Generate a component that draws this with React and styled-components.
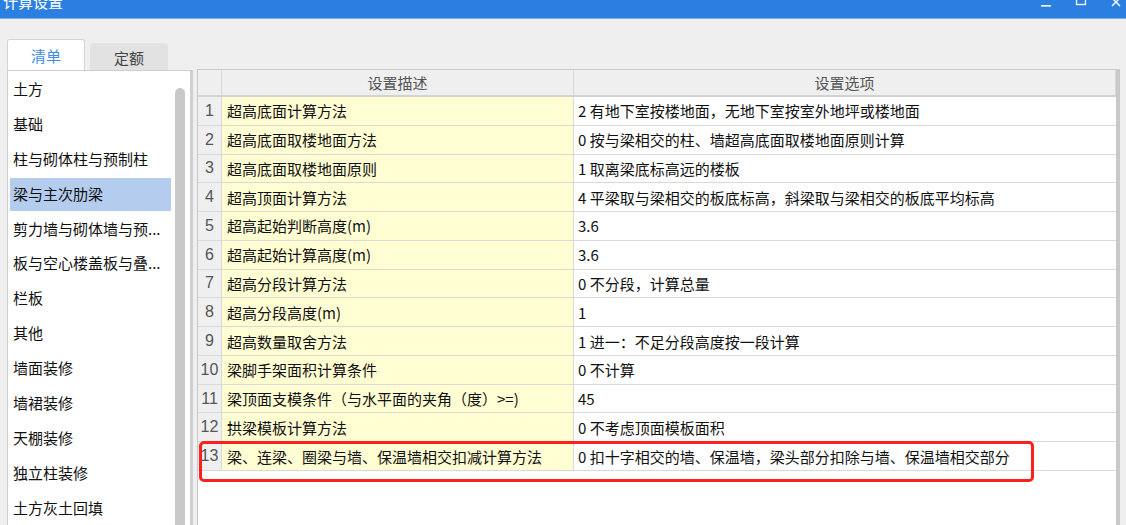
import styled, { createGlobalStyle } from 'styled-components';

const GlobalStyle = createGlobalStyle`
  body {
    margin: 0;
    background: #efefef;
    overflow: hidden;
    font-family: "Noto Sans CJK SC", "Noto Sans", sans-serif;
  }
`;

const categories = [
  '土方', '基础', '柱与砌体柱与预制柱', '梁与主次肋梁', '剪力墙与砌体墙与预...',
  '板与空心楼盖板与叠...', '栏板', '其他', '墙面装修', '墙裙装修', '天棚装修',
  '独立柱装修', '土方灰土回填',
];

const rows = [
  ['超高底面计算方法', '2 有地下室按楼地面，无地下室按室外地坪或楼地面'],
  ['超高底面取楼地面方法', '0 按与梁相交的柱、墙超高底面取楼地面原则计算'],
  ['超高底面取楼地面原则', '1 取离梁底标高远的楼板'],
  ['超高顶面计算方法', '4 平梁取与梁相交的板底标高，斜梁取与梁相交的板底平均标高'],
  ['超高起始判断高度(m)', '3.6'],
  ['超高起始计算高度(m)', '3.6'],
  ['超高分段计算方法', '0 不分段，计算总量'],
  ['超高分段高度(m)', '1'],
  ['超高数量取舍方法', '1 进一：不足分段高度按一段计算'],
  ['梁脚手架面积计算条件', '0 不计算'],
  ['梁顶面支模条件（与水平面的夹角（度）>=)', '45'],
  ['拱梁模板计算方法', '0 不考虑顶面模板面积'],
  ['梁、连梁、圈梁与墙、保温墙相交扣减计算方法', '0 扣十字相交的墙、保温墙，梁头部分扣除与墙、保温墙相交部分'],
];

export default function App() {
  return (
    <Window>
      <GlobalStyle />
      <TitleBar>
        <Title>计算设置</Title>
        <Controls>
          <svg width="12" height="10" viewBox="0 0 12 10"><rect x="1" y="5" width="10" height="1.6" fill="#fff" /></svg>
          <svg width="12" height="10" viewBox="0 0 12 10"><rect x="1.5" y="-3" width="9" height="7.5" fill="none" stroke="#fff" strokeWidth="1.3" /></svg>
          <svg width="12" height="10" viewBox="0 0 12 10"><path d="M2 -2 L10 6 M10 -2 L2 6" stroke="#fff" strokeWidth="1.4" /></svg>
        </Controls>
      </TitleBar>
      <Main>
        <Side>
          <Tabs>
            <Tab $active>清单</Tab>
            <Tab>定额</Tab>
          </Tabs>
          <ListPanel>
            <List>
              {categories.map((c, i) => (
                <Item key={c} $selected={i === 3}>{c}</Item>
              ))}
            </List>
            <ScrollTrack>
              <Thumb />
            </ScrollTrack>
          </ListPanel>
        </Side>
        <TableWrap>
          <Grid>
            <HeadCell />
            <HeadCell>设置描述</HeadCell>
            <HeadCell>设置选项</HeadCell>
            {rows.map(([d, o], i) => (
              <Row key={i}>
                <NumCell>{i + 1}</NumCell>
                <DescCell>{d}</DescCell>
                <OptCell>{o}</OptCell>
              </Row>
            ))}
          </Grid>
          <Highlight />
        </TableWrap>
      </Main>
    </Window>
  );
}

const Window = styled.div`
  width: 1126px;
  height: 525px;
  display: flex;
  flex-direction: column;
  overflow: hidden;
`;

const TitleBar = styled.div`
  height: 18px;
  flex: none;
  background: #2b7fe0;
  border-bottom: 1px solid #79aef0;
  display: flex;
  justify-content: space-between;
  overflow: hidden;
`;

const Title = styled.div`
  color: #fff;
  font-size: 15px;
  line-height: 15px;
  margin-top: -6px;
  padding-left: 3px;
`;

const Controls = styled.div`
  display: flex;
  gap: 23px;
  padding-right: 4px;
  align-items: flex-start;
`;

const Main = styled.div`
  flex: 1;
  display: flex;
  padding-left: 7px;
  min-height: 0;
`;

const Side = styled.div`
  width: 186px;
  flex: none;
  display: flex;
  flex-direction: column;
  padding-top: 20px;
`;

const Tabs = styled.div`
  display: flex;
  align-items: flex-end;
  gap: 5px;
  height: 31px;
`;

const Tab = styled.div`
  width: 78px;
  height: ${p => (p.$active ? '31px' : '27px')};
  box-sizing: border-box;
  display: flex;
  align-items: center;
  justify-content: center;
  font-size: 15px;
  color: ${p => (p.$active ? '#3d8ce8' : '#444')};
  background: ${p => (p.$active ? '#fff' : '#e2e2e2')};
  border: 1px solid ${p => (p.$active ? '#d4d4d4' : '#e2e2e2')};
  border-bottom: none;
  border-radius: 3px 3px 0 0;
`;

const ListPanel = styled.div`
  flex: 1;
  display: flex;
  background: #fff;
  border-left: 1px solid #cfcfcf;
  border-top: 1px solid #cfcfcf;
  border-right: 3px solid #d0d0d0;
  min-height: 0;
  overflow: hidden;
`;

const List = styled.div`
  width: 161px;
  padding: 1px 0 0 2px;
`;

const Item = styled.div`
  height: 34.9px;
  box-sizing: border-box;
  padding-left: 3px;
  font-size: 15px;
  line-height: 32.9px;
  color: #111;
  white-space: nowrap;
  background: ${p => (p.$selected ? '#b4cdee' : 'transparent')};
  border-top: 1px solid #fff;
  border-bottom: 1px solid #fff;
`;

const ScrollTrack = styled.div`
  flex: 1;
  padding: 17px 2px 0 4px;
`;

const Thumb = styled.div`
  width: 10px;
  height: 500px;
  background: #c9c9c9;
  border-radius: 5px;
`;

const TableWrap = styled.div`
  position: relative;
  flex: 1;
  margin: 50px 6px 0 4px;
  background: #fff;
  border-left: 1px solid #c9c9c9;
  border-top: 1px solid #c9c9c9;
  border-right: 4px solid #c9c9c9;
`;

const Grid = styled.div`
  display: grid;
  grid-template-columns: 24px 352px 1fr;
  grid-template-rows: 27px;
  grid-auto-rows: 28.77px;
`;

const Row = styled.div`
  display: contents;
`;

const Cell = styled.div`
  box-sizing: border-box;
  border-right: 1px solid #d9d9d9;
  border-bottom: 1px solid #d9d9d9;
  display: flex;
  align-items: center;
  font-size: 15px;
  color: #111;
  white-space: nowrap;
  overflow: hidden;
`;

const HeadCell = styled(Cell)`
  background: #efefef;
  justify-content: center;
  color: #555;
  border-bottom: 2px solid #d2d2d2;
  &:last-child { border-right: none; }
`;

const NumCell = styled(Cell)`
  background: #efefef;
  justify-content: center;
  color: #555;
  font-family: "Liberation Sans", Arial, sans-serif;
  font-size: 16px;
`;

const DescCell = styled(Cell)`
  background: #fffed3;
  padding-left: 5px;
`;

const OptCell = styled(Cell)`
  padding-left: 4px;
  border-right: none;
`;

const Highlight = styled.div`
  position: absolute;
  left: 1px;
  top: 371px;
  width: 835px;
  height: 41px;
  box-sizing: border-box;
  border: 3px solid #ff1f1f;
  border-radius: 5px;
  pointer-events: none;
`;
